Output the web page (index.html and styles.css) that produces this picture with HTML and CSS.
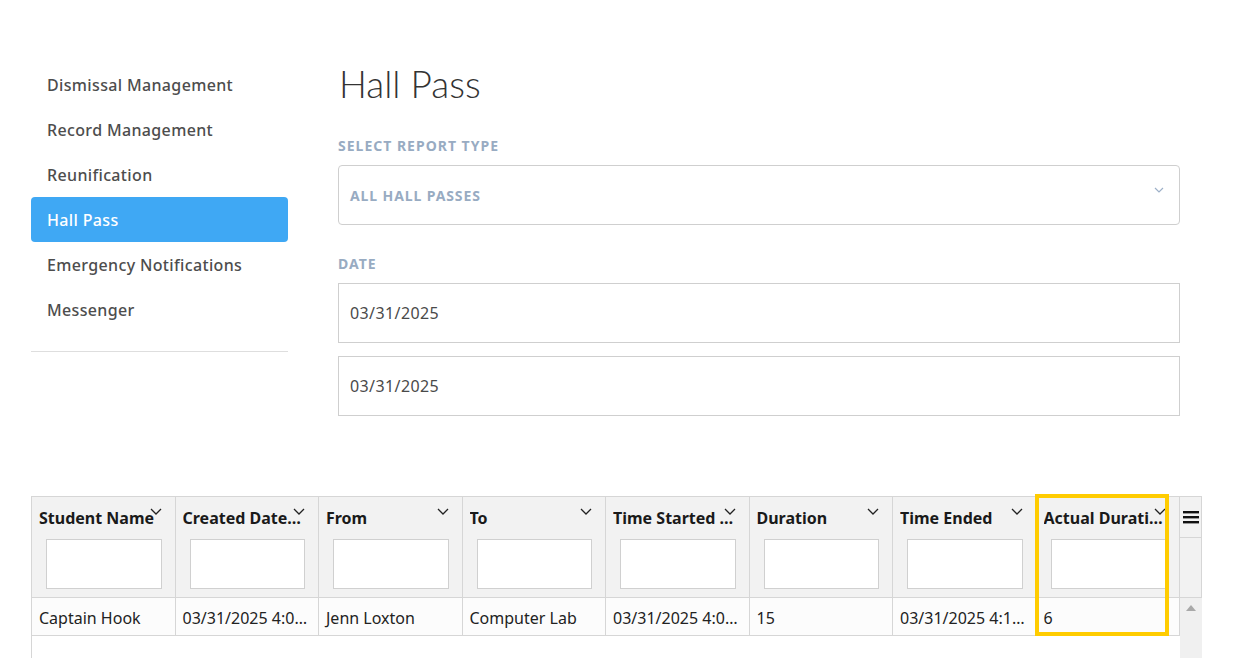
FILE: index.html
```html
<!DOCTYPE html>
<html>
<head>
<meta charset="utf-8">
<link rel="stylesheet" href="styles.css">
</head>
<body>
<div class="page">
  <div class="top">
    <nav class="sidebar">
      <a class="nav-item">Dismissal Management</a>
      <a class="nav-item">Record Management</a>
      <a class="nav-item">Reunification</a>
      <a class="nav-item active">Hall Pass</a>
      <a class="nav-item">Emergency Notifications</a>
      <a class="nav-item">Messenger</a>
      <div class="nav-divider"></div>
    </nav>
    <main class="main">
      <h1 class="title">Hall Pass</h1>
      <div class="label">SELECT REPORT TYPE</div>
      <div class="select">
        <span>ALL HALL PASSES</span>
        <svg class="select-chev" width="10" height="6" viewBox="0 0 10 6"><polyline points="1,1 5,5 9,1" fill="none" stroke="#9db0c8" stroke-width="1.2"/></svg>
      </div>
      <div class="label date-label">DATE</div>
      <div class="input">03/31/2025</div>
      <div class="input second">03/31/2025</div>
    </main>
  </div>

  <section class="grid">
    <div class="ghead">
      <div class="hcell"><div class="htitle">Student Name</div><svg class="hchev" width="12" height="7" viewBox="0 0 12 7"><polyline points="1,1 6,6 11,1" fill="none" stroke="#222" stroke-width="1.3"/></svg><div class="filter"></div></div>
      <div class="hcell"><div class="htitle">Created Date Time</div><svg class="hchev" width="12" height="7" viewBox="0 0 12 7"><polyline points="1,1 6,6 11,1" fill="none" stroke="#222" stroke-width="1.3"/></svg><div class="filter"></div></div>
      <div class="hcell"><div class="htitle">From</div><svg class="hchev" width="12" height="7" viewBox="0 0 12 7"><polyline points="1,1 6,6 11,1" fill="none" stroke="#222" stroke-width="1.3"/></svg><div class="filter"></div></div>
      <div class="hcell"><div class="htitle">To</div><svg class="hchev" width="12" height="7" viewBox="0 0 12 7"><polyline points="1,1 6,6 11,1" fill="none" stroke="#222" stroke-width="1.3"/></svg><div class="filter"></div></div>
      <div class="hcell"><div class="htitle">Time Started Time</div><svg class="hchev" width="12" height="7" viewBox="0 0 12 7"><polyline points="1,1 6,6 11,1" fill="none" stroke="#222" stroke-width="1.3"/></svg><div class="filter"></div></div>
      <div class="hcell"><div class="htitle">Duration</div><svg class="hchev" width="12" height="7" viewBox="0 0 12 7"><polyline points="1,1 6,6 11,1" fill="none" stroke="#222" stroke-width="1.3"/></svg><div class="filter"></div></div>
      <div class="hcell"><div class="htitle">Time Ended</div><svg class="hchev" width="12" height="7" viewBox="0 0 12 7"><polyline points="1,1 6,6 11,1" fill="none" stroke="#222" stroke-width="1.3"/></svg><div class="filter"></div></div>
      <div class="hcell"><div class="htitle">Actual Duration</div><svg class="hchev" width="12" height="7" viewBox="0 0 12 7"><polyline points="1,1 6,6 11,1" fill="none" stroke="#222" stroke-width="1.3"/></svg><div class="filter"></div></div>
      <div class="menucell">
        <div class="menu-top"><svg width="16" height="14" viewBox="0 0 16 14"><rect x="0" y="1" width="16" height="2.4" fill="#111"/><rect x="0" y="6" width="16" height="2.4" fill="#111"/><rect x="0" y="11" width="16" height="2.4" fill="#111"/></svg></div>
      </div>
    </div>
    <div class="gbody">
      <div class="rows">
        <div class="row">
          <div class="cell">Captain Hook</div>
          <div class="cell">03/31/2025 4:05 PM</div>
          <div class="cell">Jenn Loxton</div>
          <div class="cell">Computer Lab</div>
          <div class="cell">03/31/2025 4:05 PM</div>
          <div class="cell">15</div>
          <div class="cell">03/31/2025 4:11 PM</div>
          <div class="cell">6</div>
        </div>
      </div>
      <div class="scrollbar"><svg width="10" height="6" viewBox="0 0 10 6"><polygon points="0,6 5,0 10,6" fill="#a9a9a9"/></svg></div>
    </div>
    <div class="highlight"></div>
  </section>
</div>
</body>
</html>
```

FILE: styles.css
```css
html, body {
  margin: 0;
  padding: 0;
  background: #fff;
  overflow: hidden;
}
body {
  font-family: "Noto Sans", "Liberation Sans", sans-serif;
  color: #4a4a4a;
}
.page {
  width: 1236px;
  height: 658px;
  overflow: hidden;
}
.top {
  display: flex;
  padding-top: 62px;
}
.sidebar {
  width: 257px;
  margin-left: 31px;
  display: flex;
  flex-direction: column;
}
.nav-item {
  display: flex;
  align-items: center;
  height: 45px;
  padding-left: 16px;
  font-size: 16px;
  font-weight: 500;
  letter-spacing: 0.35px;
  color: #4d4d4d;
  border-radius: 4px;
}
.nav-item.active {
  background: #3fa8f4;
  color: #fff;
}
.nav-divider {
  margin-top: 19px;
  height: 1px;
  background: #dedede;
}
.main {
  margin-left: 50px;
  width: 842px;
  display: flex;
  flex-direction: column;
}
.title {
  margin: 2px 0 0 1px;
  font-family: "Lato", sans-serif;
  font-weight: 300;
  font-size: 37px;
  line-height: 40px;
  color: #333;
}
.label {
  margin-top: 34px;
  font-size: 14px;
  font-weight: 700;
  letter-spacing: 1px;
  color: #98abc2;
  line-height: 16px;
}
.date-label {
  margin-top: 31px;
}
.select {
  margin-top: 11px;
  height: 58px;
  border: 1px solid #cfcfcf;
  border-radius: 4px;
  display: flex;
  align-items: center;
  justify-content: space-between;
  padding: 0 15px 0 11px;
  font-size: 14px;
  font-weight: 700;
  letter-spacing: 0.9px;
  color: #98abc2;
}
.select-chev {
  margin-top: -10px;
}
.input {
  margin-top: 11px;
  height: 58px;
  border: 1px solid #cfcfcf;
  display: flex;
  align-items: center;
  padding-left: 11px;
  font-size: 16px;
  letter-spacing: 0.4px;
  color: #4a4a4a;
}
.input.second {
  margin-top: 13px;
}

/* grid */
.grid {
  position: relative;
  margin-top: 80px;
  margin-left: 31px;
  width: 1171px;
}
.ghead {
  display: grid;
  grid-template-columns: repeat(8, minmax(0, 1fr)) 21px;
  background: #f2f2f2;
  border: 1px solid #d6d6d6;
}
.hcell {
  position: relative;
  border-right: 1px solid #d6d6d6;
  height: 100px;
  padding: 0 13px 0 7px;
  display: flex;
  flex-direction: column;
  min-width: 0;
}
.htitle {
  margin-top: 10px;
  height: 22px;
  line-height: 22px;
  font-size: 16px;
  font-weight: 700;
  color: #1a1a1a;
  white-space: nowrap;
  overflow: hidden;
  text-overflow: ellipsis;
}
.hchev {
  position: absolute;
  right: 13px;
  top: 11px;
}
.filter {
  margin: 10px 0 0 7px;
  height: 48px;
  background: #fff;
  border: 1px solid #d0d0d0;
}
.menucell {
  display: flex;
  flex-direction: column;
}
.menu-top {
  height: 40px;
  border-bottom: 1px solid #d6d6d6;
  display: flex;
  align-items: center;
  justify-content: center;
}
.gbody {
  display: flex;
  height: 64px;
  border-left: 1px solid #d6d6d6;
}
.rows {
  flex: 1;
  min-width: 0;
}
.row {
  display: grid;
  grid-template-columns: repeat(8, minmax(0, 1fr));
  height: 37px;
  background: #fcfcfc;
  border-bottom: 1px solid #d6d6d6;
}
.cell {
  border-right: 1px solid #d6d6d6;
  padding: 3px 8px 0 7px;
  font-size: 16px;
  line-height: 34px;
  color: #222;
  white-space: nowrap;
  overflow: hidden;
  text-overflow: ellipsis;
  min-width: 0;
}
.scrollbar {
  width: 22px;
  background: #f0f0f0;
  display: flex;
  justify-content: center;
  align-items: flex-start;
  padding-top: 7px;
  box-sizing: border-box;
}
.highlight {
  position: absolute;
  left: 1004px;
  top: -2px;
  width: 126px;
  height: 134px;
  border: 4px solid #ffcc00;
  pointer-events: none;
}
```
